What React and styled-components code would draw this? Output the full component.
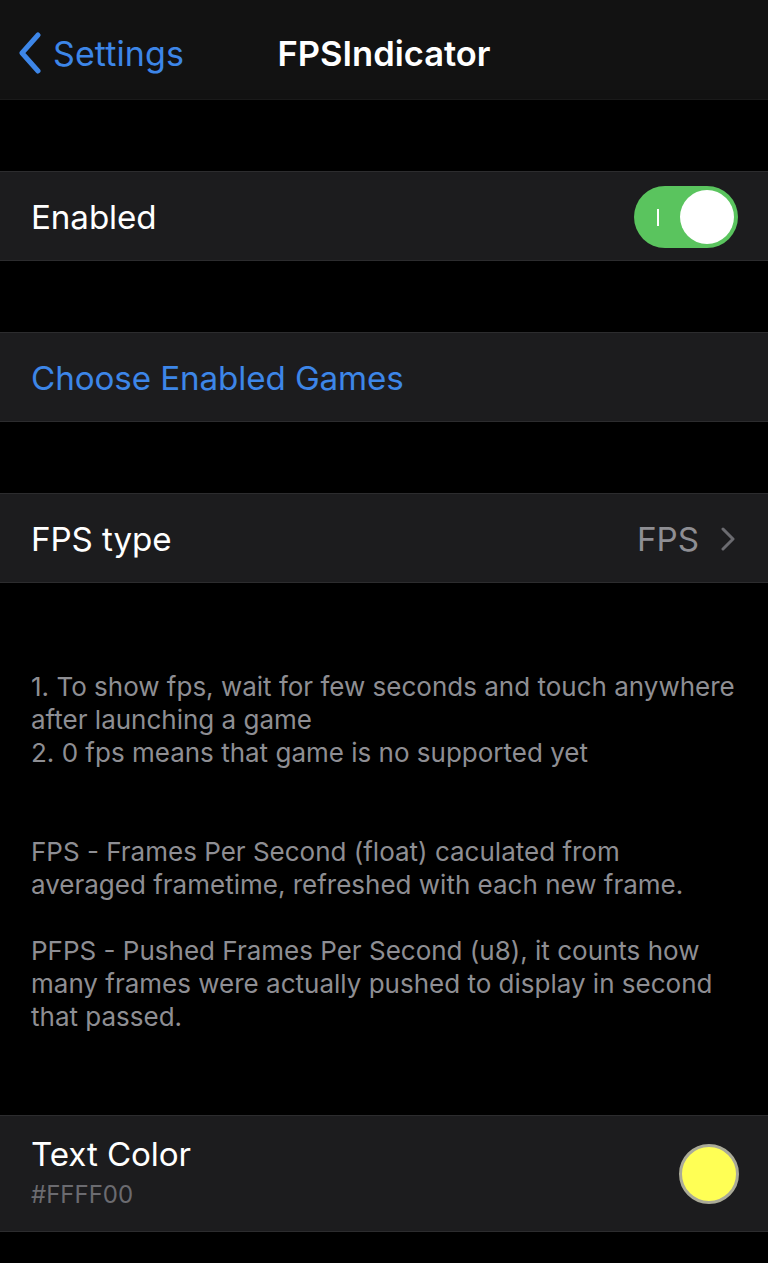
import styled, { createGlobalStyle } from 'styled-components';

const GlobalStyle = createGlobalStyle`
  html, body {
    margin: 0;
    padding: 0;
    background: #000000;
    font-family: Inter, "Noto Sans", sans-serif;
    -webkit-font-smoothing: antialiased;
  }
`;

const Page = styled.div`
  width: 768px;
  min-height: 1263px;
  background: #000000;
  color: #ffffff;
`;

const NavBar = styled.header`
  height: 100px;
  background: #121212;
  display: grid;
  grid-template-columns: 1fr auto 1fr;
  align-items: center;
  padding-top: 7px;
  box-sizing: border-box;
  border-bottom: 1px solid #1a1a1a;
`;

const BackButton = styled.div`
  display: flex;
  align-items: center;
  gap: 10px;
  padding-left: 17px;
  color: #3d86e8;
  font-size: 34px;
  letter-spacing: 0.1px;
`;

const Title = styled.h1`
  margin: 0;
  font-size: 34.5px;
  font-weight: 600;
  letter-spacing: 0;
`;

const Gap = styled.div`
  height: ${(p) => p.h}px;
`;

const Cell = styled.div`
  height: ${(p) => p.h || 90}px;
  background: #1c1c1e;
  border-top: 1px solid #2c2c2e;
  border-bottom: 1px solid #2c2c2e;
  display: flex;
  align-items: center;
  justify-content: space-between;
  padding: 1px 31px 0;
  box-sizing: border-box;
`;

const Label = styled.span`
  font-size: 33.2px;
  letter-spacing: -0.1px;
  color: ${(p) => (p.link ? '#3d86e8' : '#ffffff')};
`;

const Stack = styled.div`
  display: flex;
  flex-direction: column;
  gap: 6px;
  margin-top: -6px;
`;

const Sub = styled.span`
  font-size: 24px;
  color: #6b6b70;
`;

const Toggle = styled.div`
  width: 104px;
  height: 62px;
  border-radius: 31px;
  background: #5ac45e;
  position: relative;
  margin-right: -1px;

  &::before {
    content: '';
    position: absolute;
    left: 23px;
    top: 23px;
    width: 2px;
    height: 17px;
    background: #ffffff;
  }

  &::after {
    content: '';
    position: absolute;
    right: 4px;
    top: 4px;
    width: 54px;
    height: 54px;
    border-radius: 50%;
    background: #ffffff;
  }
`;

const Value = styled.div`
  display: flex;
  align-items: center;
  gap: 22px;
  color: #8e8e93;
  font-size: 33.2px;
  margin-right: 2px;
`;

const Footer = styled.div`
  padding: 0 31px;
  color: #8e8e93;
  font-size: 26px;
  line-height: 33px;
  letter-spacing: 0;

  p {
    margin: 0;
  }
`;

const Swatch = styled.div`
  width: 54px;
  height: 54px;
  border-radius: 50%;
  background: #ffff55;
  border: 3px solid #aaaa98;
  margin-right: -2px;
`;

export default function App() {
  return (
    <Page>
      <GlobalStyle />
      <NavBar>
        <BackButton>
          <svg width="26" height="42" viewBox="0 0 26 42">
            <path d="M21 3 L5 21 L21 39" fill="none" stroke="#3d86e8" strokeWidth="5" strokeLinecap="round" strokeLinejoin="round" />
          </svg>
          Settings
        </BackButton>
        <Title>FPSIndicator</Title>
        <div />
      </NavBar>

      <Gap h={71} />
      <Cell>
        <Label>Enabled</Label>
        <Toggle />
      </Cell>

      <Gap h={71} />
      <Cell>
        <Label link>Choose Enabled Games</Label>
      </Cell>

      <Gap h={71} />
      <Cell>
        <Label>FPS type</Label>
        <Value>
          FPS
          <svg width="14" height="24" viewBox="0 0 14 24">
            <path d="M2 2 L12 12 L2 22" fill="none" stroke="#6b6b70" strokeWidth="3" strokeLinecap="round" strokeLinejoin="round" />
          </svg>
        </Value>
      </Cell>

      <Gap h={87} />
      <Footer>
        <p>1. To show fps, wait for few seconds and touch anywhere after launching a game</p>
        <p>2. 0 fps means that game is no supported yet</p>
      </Footer>

      <Gap h={66} />
      <Footer>
        <p>FPS - Frames Per Second (float) caculated from averaged frametime, refreshed with each new frame.</p>
        <br />
        <p>PFPS - Pushed Frames Per Second (u8), it counts how many frames were actually pushed to display in second that passed.</p>
      </Footer>

      <Gap h={82} />
      <Cell h={117}>
        <Stack>
          <Label>Text Color</Label>
          <Sub>#FFFF00</Sub>
        </Stack>
        <Swatch />
      </Cell>
    </Page>
  );
}
